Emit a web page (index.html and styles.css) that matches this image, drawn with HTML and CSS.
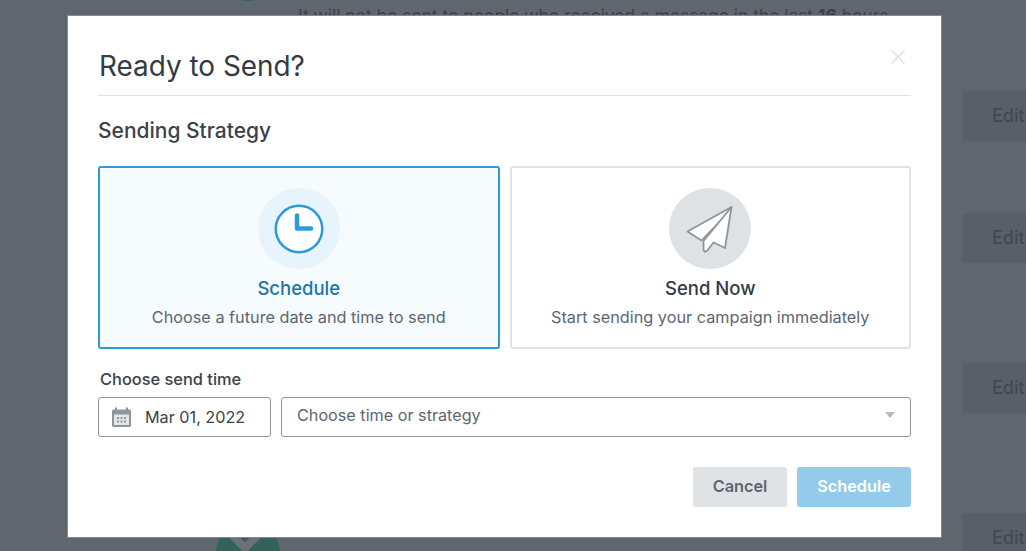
FILE: index.html
```html
<!DOCTYPE html>
<html lang="en">
<head>
  <meta charset="UTF-8" />
  <meta name="viewport" content="width=device-width, initial-scale=1.0" />
  <title>Ready to Send?</title>
  <link rel="stylesheet" href="styles.css">
</head>
<body>
  <main class="page">
    <div class="page-top">
      <span class="green-dot green-dot-top"></span>
      <p class="row-note">It will not be sent to people who received a message in the last <strong>16</strong> hours.</p>
    </div>
    <div class="page-row page-row-short"><button class="edit-button">Edit</button></div>
    <div class="page-row"><button class="edit-button">Edit</button></div>
    <div class="page-row"><button class="edit-button">Edit</button></div>
    <div class="page-row">
      <span class="green-dot green-dot-bottom">
        <svg viewBox="0 0 64 64" width="64" height="64"><path d="M17 15l12 12 18-18" fill="none" stroke="#6b7178" stroke-width="8"/></svg>
      </span>
      <button class="edit-button">Edit</button>
    </div>
  </main>

  <div class="overlay">
    <div class="modal">
      <header class="modal-header">
        <h1>Ready to Send?</h1>
        <button class="close-button" title="Close">
          <svg viewBox="0 0 16 16" width="16" height="16"><path d="M1.500 1.500l13 13M14.500 1.500l-13 13" stroke="#dcdfe2" stroke-width="1.400" fill="none"/></svg>
        </button>
      </header>

      <h2>Sending Strategy</h2>

      <div class="strategy-list">
        <div class="strategy strategy-active">
          <span class="strategy-icon">
            <svg viewBox="0 0 50 50" width="50" height="50">
              <circle cx="25" cy="25" r="23.250" fill="#fff" stroke="#2e9bd9" stroke-width="2.500"/>
              <path d="M23 11.500V24.500H37" fill="none" stroke="#2e9bd9" stroke-width="4.500" stroke-linecap="round" stroke-linejoin="round"/>
            </svg>
          </span>
          <h3>Schedule</h3>
          <p>Choose a future date and time to send</p>
        </div>
        <div class="strategy">
          <span class="strategy-icon">
            <svg viewBox="0 0 48 48" width="48" height="48">
              <path d="M45.500 2L1.500 26.500L15.500 35.500L39 11Z" fill="#fff" stroke="#8f959c" stroke-width="1.800" stroke-linejoin="round"/>
              <path d="M45.500 2L17.500 36V44.500Q18 47.500 21 46L27.500 37.500L39 43Z" fill="#fff" stroke="#8f959c" stroke-width="1.800" stroke-linejoin="round"/>
            </svg>
          </span>
          <h3>Send Now</h3>
          <p>Start sending your campaign immediately</p>
        </div>
      </div>

      <label class="time-label">Choose send time</label>
      <div class="time-fields">
        <div class="field field-date">
          <svg viewBox="0 0 21 21" width="21" height="21">
            <path d="M5 0.500V4M16 0.500V4" stroke="#8f959c" stroke-width="2"/>
            <rect x="1" y="2.500" width="19" height="17.500" rx="1.500" fill="#8f959c"/>
            <rect x="3" y="7.500" width="15" height="10.500" fill="#e3e5e8"/>
            <path d="M6 10h2v2H6zM9.500 10h2v2h-2zM13 10h2v2h-2zM6 13.500h2v2H6zM9.500 13.500h2v2h-2zM13 13.500h2v2h-2z" fill="#8f959c"/>
          </svg>
          <span>Mar 01, 2022</span>
        </div>
        <div class="field field-select">
          <span>Choose time or strategy</span>
          <span class="select-arrow"></span>
        </div>
      </div>

      <footer class="modal-footer">
        <button class="btn btn-cancel">Cancel</button>
        <button class="btn btn-schedule">Schedule</button>
      </footer>
    </div>
  </div>
</body>
</html>
```

FILE: styles.css
```css
html { height: 551px; overflow: hidden; }
body { margin: 0; height: 551px; overflow: hidden; background: #5f666e; font-family: "Inter", "Liberation Sans", sans-serif; color: #3c4249; }

.page { display: flex; flex-direction: column; width: 856px; height: 551px; overflow: hidden; padding-left: 216px; }
.page-top { position: relative; flex: none; height: 60px; }
.row-note { margin: 5px 0 0 82px; font-size: 17.400px; line-height: 22px; color: #3c4249; white-space: nowrap; }
.page-row { flex: none; display: flex; justify-content: space-between; align-items: flex-start; height: 150px; padding-top: 30px; box-sizing: border-box; border-top: 1px solid #636a72; }
.page-row-short { height: 122px; }
.green-dot { display: block; width: 64px; height: 64px; border-radius: 50%; background: #32625a; }
.green-dot-top { position: absolute; top: -63px; left: 0; }
.green-dot-bottom { margin-top: 8px; }
.green-dot svg { display: block; }
.edit-button { flex: none; margin-left: auto; width: 110px; height: 50px; border: none; border-radius: 3px; background: #585f67; color: #434951; font: 500 18px "Inter", sans-serif; text-align: left; padding: 0 0 2px 30px; }

.overlay { position: fixed; top: 0; left: 0; right: 0; bottom: 0; }
.modal { position: absolute; top: 15px; left: 67px; width: 813px; height: 461px; padding: 30px; background: white; border: 1px solid #858a90; }

.modal-header { display: flex; justify-content: space-between; align-items: flex-start; height: 49px; border-bottom: 1px solid #dfe2e5; }
.modal-header h1 { margin: 4px 0 0 1px; font-size: 27.900px; font-weight: 400; line-height: 32px; color: #343b43; }
.close-button { background: none; border: none; padding: 0; margin: 3px 5px 0 0; line-height: 0; cursor: pointer; }

h2 { margin: 23px 0 23px; font-size: 21px; font-weight: 500; line-height: 24px; color: #3c4249; }

.strategy-list { display: flex; gap: 10px; }
.strategy { flex: 1; height: 183px; box-sizing: border-box; padding-top: 20px; text-align: center; border: 2px solid #e0e3e6; border-radius: 3px; }
.strategy h3 { margin: 7px 0 0; font-size: 18.500px; font-weight: 500; line-height: 24px; color: #343b43; }
.strategy p { margin: 5px 0 0; font-size: 16.250px; line-height: 24px; color: #5d6670; }
.strategy-icon { display: flex; justify-content: center; align-items: center; width: 82px; height: 81px; margin: 0 auto; border-radius: 50%; background: #dfe2e5; }
.strategy-active { border-color: #2e9bd9; background: #f6fbfe; }
.strategy-active h3 { color: #1d76a8; }
.strategy-active .strategy-icon { background: #e7f4fb; }

.time-label { display: block; margin: 20px 0 8px 2px; font-size: 16.400px; font-weight: 500; line-height: 20px; color: #3c4249; }
.time-fields { display: flex; gap: 10px; }
.field { display: flex; align-items: center; height: 40px; box-sizing: border-box; border: 1px solid #8f959c; border-radius: 3px; font-size: 16.200px; }
.field-date { flex: none; width: 173px; gap: 13px; padding-left: 12px; color: #3c4249; }
.field-select { flex: 1; justify-content: space-between; padding: 0 15px 5px; color: #5d6670; }
.select-arrow { width: 0; height: 0; border-left: 5.500px solid transparent; border-right: 5.500px solid transparent; border-top: 6.500px solid #b5babf; }

.modal-footer { display: flex; justify-content: flex-end; gap: 10px; margin-top: 30px; }
.btn { height: 40px; border: none; border-radius: 3px; padding: 0 0 2px; font: 600 16.300px "Inter", sans-serif; cursor: pointer; }
.btn-cancel { width: 94px; background: #e0e3e6; color: #5d6670; }
.btn-schedule { width: 114px; background: #94cbea; color: white; }
```
